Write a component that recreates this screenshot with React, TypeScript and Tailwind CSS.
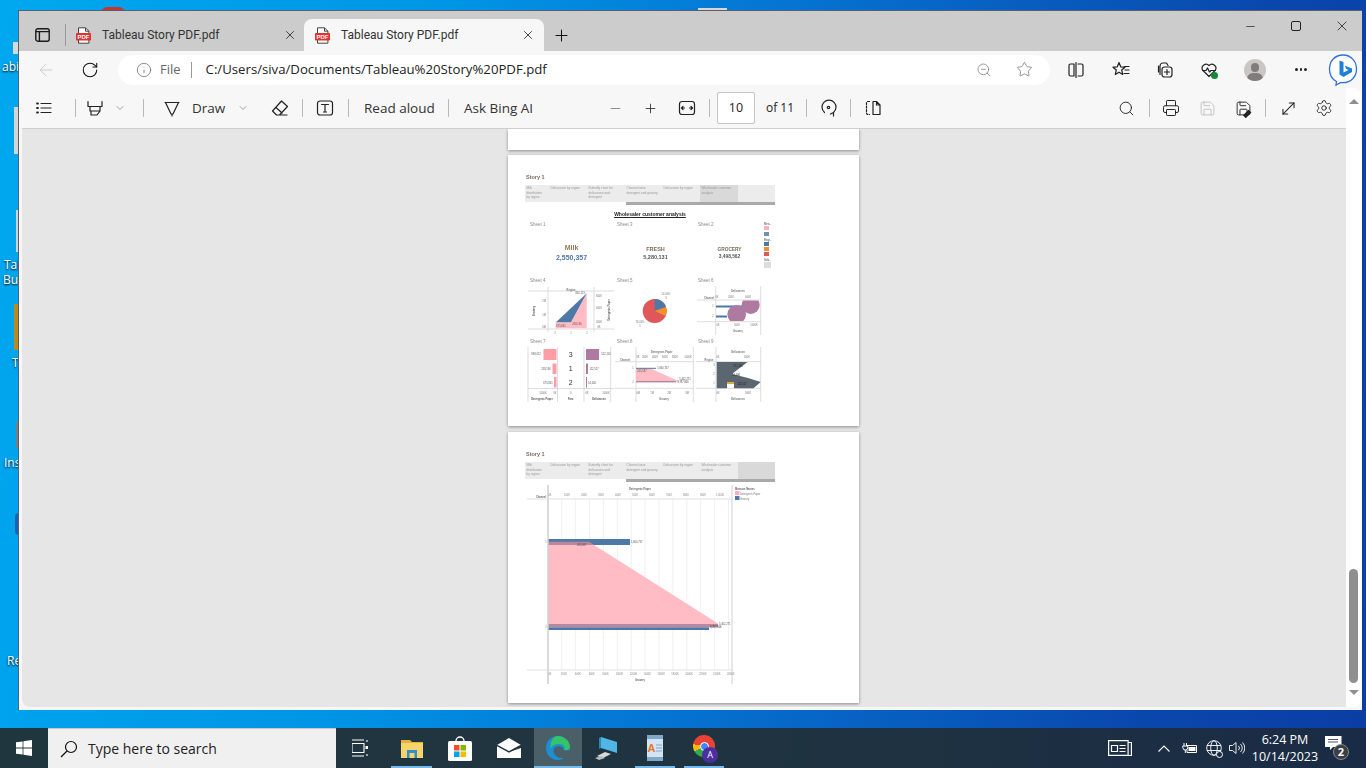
import { ChevronDown, Minus, Plus, Search, Printer, Save, Settings, X, MoveDiagonal, ArrowLeft, RotateCw, Info, ZoomOut, Star } from 'lucide-react'
import type { ReactNode } from 'react'

const BLUE = '#4e79a7'
const PINK = '#ffbcc4'
const PURPLE = '#af7aa1'
const AX = '#d4d4d4'
const LBL = '#777'

function Icon({ w = 20, h = 20, children }: { w?: number; h?: number; children: ReactNode }) {
  return (
    <svg width={w} height={h} viewBox="0 0 20 20" fill="none" stroke="currentColor" strokeWidth="1.2" strokeLinecap="round" strokeLinejoin="round" className="shrink-0">
      {children}
    </svg>
  )
}

function Sep() {
  return <div className="w-px h-[18px] bg-[#b9b9b9] shrink-0" />
}

function PdfIcon() {
  return (
    <svg width="15" height="17" viewBox="0 0 15 17" className="shrink-0">
      <path d="M2.5 .8h7l3.4 3.4v12H2.5z" fill="#fff" stroke="#444" strokeWidth="1" />
      <path d="M9.5 .8v3.4h3.4" fill="none" stroke="#444" strokeWidth="1" />
      <rect x="0" y="6" width="15" height="7.5" rx=".8" fill="#e8312f" />
      <text x="7.5" y="12" textAnchor="middle" fontSize="6" fontWeight="700" fill="#fff" fontFamily="Liberation Sans, sans-serif">PDF</text>
    </svg>
  )
}

function TabStrip() {
  return (
    <div className="h-[40px] bg-[#cccccc] flex items-end shrink-0">
      <div className="h-[32px] flex items-center ml-[13px] w-[20px] justify-center">
        <svg width="15" height="14" viewBox="0 0 15 14" fill="none" stroke="#1a1a1a" strokeWidth="1.4">
          <rect x=".8" y=".8" width="13.4" height="12.4" rx="2" />
          <path d="M.8 3.6h13.4M4.4 3.6v9.6" />
        </svg>
      </div>
      <div className="h-[32px] flex items-center ml-[13px]"><div className="w-px h-[22px] bg-[#999]" /></div>
      <div className="h-[32px] w-[227px] flex items-center ml-[10px] pr-[6px] text-[12px] text-[#333] font-['Roboto',sans-serif]">
        <PdfIcon />
        <span className="ml-[11px] whitespace-nowrap">Tableau Story PDF.pdf</span>
        <X size={14} strokeWidth={1.4} className="ml-auto text-[#222]" />
      </div>
      <div className="h-[32px] w-[240px] ml-[1px] bg-[#f7f7f7] rounded-t-[8px] flex items-center pl-[11px] pr-[9px] text-[12px] text-[#333] font-['Roboto',sans-serif]">
        <PdfIcon />
        <span className="ml-[11px] whitespace-nowrap">Tableau Story PDF.pdf</span>
        <X size={14} strokeWidth={1.4} className="ml-auto text-[#222]" />
      </div>
      <div className="h-[32px] flex items-center ml-[7px] w-[20px] justify-center">
        <Plus size={19} strokeWidth={1.3} className="text-[#111]" />
      </div>
      <div className="ml-auto flex gap-[26px] pr-[10px] h-[30px] self-start items-center text-[#222]">
        <div className="w-[20px] flex justify-center"><Minus size={13} strokeWidth={1.3} /></div>
        <div className="w-[20px] flex justify-center"><div className="w-[10px] h-[10px] border border-[#222] rounded-[2px]" /></div>
        <div className="w-[20px] flex justify-center"><X size={16} strokeWidth={1.2} /></div>
      </div>
    </div>
  )
}

function AddressRow() {
  return (
    <div className="h-[37px] flex items-center shrink-0 bg-[#f7f7f7]">
      <div className="ml-[17px] w-[20px] flex justify-center text-[#c4c4c4]"><ArrowLeft size={20} strokeWidth={1} /></div>
      <div className="ml-[24px] w-[20px] flex justify-center text-[#111]"><RotateCw size={18} strokeWidth={1.4} /></div>
      <div className="ml-[18px] w-[932px] h-[30px] bg-white rounded-full flex items-center pl-[18px] pr-[17px]">
        <Info size={16} strokeWidth={1.1} className="text-[#666]" />
        <span className="ml-[8px] text-[13px] text-[#666]">File</span>
        <div className="ml-[10px] w-px h-[16px] bg-[#999]" />
        <span className="ml-[14px] text-[13.2px] text-[#222] whitespace-nowrap">C:/Users/siva/Documents/Tableau%20Story%20PDF.pdf</span>
        <ZoomOut size={16} strokeWidth={1.1} className="ml-auto mr-[1px] text-[#777]" />
        <Star size={17} strokeWidth={1.1} className="ml-[23px] text-[#777]" />
      </div>
      <div className="ml-[16px] text-[#222]">
        <Icon><path d="M4.5 4h3.5v12H4.5a1.5 1.5 0 0 1-1.5-1.5v-9A1.5 1.5 0 0 1 4.5 4zM12 4h3.500a1.500 1.500 0 0 1 1.500 1.500v9a1.500 1.500 0 0 1-1.500 1.500H12M10 2.500v15" /></Icon>
      </div>
      <div className="ml-[25px] text-[#222]">
        <Icon><path d="M8 2.500l1.700 4.300 4.300.4-3.300 2.800 1 4.400L8 12.200l-3.700 2.200 1-4.400L2 7.200l4.300-.4zM13.500 6.500H18M14 10h4M13 13.500h5" /></Icon>
      </div>
      <div className="ml-[24px] text-[#222]">
        <Icon><path d="M5 14.500V6a3 3 0 0 1 3-3h3.500l1.500 2.500M3.500 12V6" /><rect x="7" y="7" width="10" height="10" rx="2.500" /><path d="M12 9.500v5M9.500 12h5" /></Icon>
      </div>
      <div className="ml-[24px] relative text-[#222]">
        <Icon><path d="M10 16.500L3.500 10a4 4 0 0 1 6.500-4.500A4 4 0 0 1 16.500 10L10 16.500M3.500 10.500H7l1.500-2.500 2 4 1.500-1.500h4.500" /></Icon>
        <div className="absolute right-[1px] bottom-[1px] w-[7px] h-[7px] rounded-full bg-[#14893c]" />
      </div>
      <div className="ml-[25px] w-[22px] h-[22px] rounded-full bg-[#c9c6c3] overflow-hidden relative shrink-0">
        <div className="absolute left-[7px] top-[4px] w-[8px] h-[9px] rounded-full bg-[#7f7c7a]" />
        <div className="absolute left-[3px] top-[14px] w-[16px] h-[12px] rounded-full bg-[#7f7c7a]" />
      </div>
      <div className="ml-[25px] w-[20px] flex justify-center gap-[2px]">
        <span className="w-[2.5px] h-[2.500px] rounded-full bg-[#222]" />
        <span className="w-[2.5px] h-[2.500px] rounded-full bg-[#222]" />
        <span className="w-[2.5px] h-[2.500px] rounded-full bg-[#222]" />
      </div>
      <div className="ml-[17px]">
        <svg width="30" height="34" viewBox="0 0 30 34" fill="none">
          <path d="M15 2C7 2 1.500 8 1.500 16c0 6 3 10.500 7 12.500L8 32l5-2.500c1 .2 1.500 .2 2 .2 8 0 13.500-6 13.500-13.700S23 2 15 2z" fill="#fff" stroke="#2f6fe0" strokeWidth="1.300" />
          <path d="M11.500 7.500l4 1.500v10.500l5-2.500-2.500-1.300-1-3 7 2.800v3.500l-8.500 5-4-2.500z" fill="#1f7fd6" />
        </svg>
      </div>
    </div>
  )
}

function PdfToolbar() {
  return (
    <div className="h-[41px] bg-[#f7f7f7] border-b border-[#cfcfcf] rounded-tl-[8px] flex items-center text-[#222] shrink-0 text-[13.5px]">
      <div className="w-[44px] flex justify-center">
        <Icon><path d="M7 5.500h10M7 10h10M7 14.500h10" /><path d="M3 5.500h1M3 10h1M3 14.500h1" strokeWidth="1.800" /></Icon>
      </div>
      <div className="ml-[9px]"><Sep /></div>
      <div className="ml-[9px] w-[20px]">
        <Icon><path d="M3 3.500v5h14v-5M5 8.500v4.500h10V8.500M6 13v4h6l3-4" /></Icon>
      </div>
      <ChevronDown size={12} strokeWidth={1.200} className="ml-[9px] text-[#666]" />
      <div className="ml-[17px]"><Sep /></div>
      <div className="ml-[18px]">
        <Icon><path d="M3 4.500h14M3.500 4.500l5.500 11.500h2l5.500-11.500M10 16v2" /></Icon>
      </div>
      <span className="ml-[10px] w-[32px] whitespace-nowrap text-[#333]">Draw</span>
      <ChevronDown size={12} strokeWidth={1.200} className="ml-[13px] text-[#666]" />
      <div className="ml-[21px]">
        <Icon><path d="M11.500 3l6 5.500-8 8.500H6.500L2.500 13zM6 9.500l6 5.500M6.500 17H17" /></Icon>
      </div>
      <div className="ml-[12px]"><Sep /></div>
      <div className="ml-[12px]">
        <Icon><rect x="2.500" y="3" width="15" height="14" rx="2.500" /><path d="M6.500 6.500h7M10 6.500v7.500M8.500 14h3" /></Icon>
      </div>
      <div className="ml-[13px]"><Sep /></div>
      <span className="ml-[15px] w-[70px] whitespace-nowrap text-[#333]">Read aloud</span>
      <div className="ml-[14px]"><Sep /></div>
      <span className="ml-[15px] w-[71px] whitespace-nowrap text-[#333]">Ask Bing AI</span>
      <div className="ml-[70px] w-[20px] flex justify-center text-[#777]"><Minus size={15} strokeWidth={1.300} /></div>
      <div className="ml-[15px] w-[20px] flex justify-center"><Plus size={15} strokeWidth={1.300} /></div>
      <div className="ml-[17px]">
        <Icon><rect x="2.500" y="3.500" width="15" height="13" rx="2.500" /><path d="M4.500 10h3M15.500 10h-3M6 8.500L4.500 10 6 11.500M14 8.500l1.500 1.500-1.500 1.500" /></Icon>
      </div>
      <div className="ml-[12px]"><Sep /></div>
      <div className="ml-[7px] w-[38px] h-[32px] bg-white border border-[#c4c4c4] rounded-[2px] flex items-center justify-center text-[12.5px]">10</div>
      <span className="ml-[11px] w-[27px] whitespace-nowrap text-[12px]">of 11</span>
      <div className="ml-[13px]"><Sep /></div>
      <div className="ml-[11px]">
        <Icon><path d="M6.500 14.500a7 7 0 1 1 9 0M15.500 14.500v3.500M15.500 14.500l-3 1.500" /><circle cx="10.500" cy="9.500" r="1.200" /></Icon>
      </div>
      <div className="ml-[12px]"><Sep /></div>
      <div className="ml-[12px]">
        <Icon><path d="M10 3.500h3.500l3.500 3.500v9.500h-7zM13.500 3.500V7H17" /><path d="M6.500 3.500H4.500l-1 1v11l1 1h2" strokeDasharray="2 1.500" /></Icon>
      </div>
      <div className="ml-[233px] w-[20px] flex justify-center"><Search size={17} strokeWidth={1.300} /></div>
      <div className="ml-[13px]"><Sep /></div>
      <div className="ml-[11px] w-[20px] flex justify-center"><Printer size={18} strokeWidth={1.300} /></div>
      <div className="ml-[16px] w-[20px] flex justify-center text-[#b5b5b5]"><Save size={17} strokeWidth={1.100} /></div>
      <div className="ml-[16px] relative w-[20px] flex justify-center">
        <Save size={17} strokeWidth={1.300} />
        <div className="absolute right-[2px] bottom-[1px] w-[8px] h-[3.500px] bg-[#222] -rotate-45" />
      </div>
      <div className="ml-[12px]"><Sep /></div>
      <div className="ml-[12px] w-[20px] flex justify-center"><MoveDiagonal size={19} strokeWidth={1.300} /></div>
      <div className="ml-[16px] w-[20px] flex justify-center"><Settings size={18} strokeWidth={1.200} /></div>
    </div>
  )
}

const TABS = [
  { w: 'w-[24px]', t: 'Milk\ndistribution\nby region' },
  { w: 'w-[38px]', t: 'Delicassen by region' },
  { w: 'w-[38px]', t: 'Butterfly chart for\ndelicassen and\ndetergent' },
  { w: 'w-[37px]', t: 'Channel wise\ndetergent and grocery' },
  { w: 'w-[38px]', t: 'Delicassen by region' },
  { w: 'w-[38px]', t: 'Wholesaler customer\nanalysis' },
]

function StoryHeader({ selected, lastSelected }: { selected?: number; lastSelected?: boolean }) {
  return (
    <>
      <div className="h-[6px] mt-[19px] ml-[1px] text-[5.500px] leading-[6px] font-bold text-[#7a6a58]">Story 1</div>
      <div className="mt-[5px] w-[250px] h-[17px] bg-[#ececec] flex">
        {TABS.map((tab, i) => (
          <div key={i} className={`${tab.w} h-full pt-[1px] pl-[1.500px] text-[3.200px] leading-[4.500px] text-[#999] whitespace-pre-line overflow-hidden ${i === selected ? 'bg-[#d9d9d9] text-[#666]' : ''}`}>
            {tab.t}
          </div>
        ))}
        <div className={`flex-1 ${lastSelected ? 'bg-[#d9d9d9]' : ''}`} />
      </div>
      <div className="w-[250px] h-[3px] pl-[101px]"><div className="h-full bg-[#a9a9a9]" /></div>
    </>
  )
}

function T({ x, y, s = 2.6, c = LBL, a = 'middle', b, r, children }: { x: number; y: number; s?: number; c?: string; a?: 'middle' | 'start' | 'end'; b?: boolean; r?: number; children: ReactNode }) {
  return (
    <text x={x} y={y} fontSize={s} fill={c} textAnchor={a} fontWeight={b ? 700 : 400} transform={r ? `rotate(${r} ${x} ${y})` : undefined}>
      {children}
    </text>
  )
}

function Line({ x1, y1, x2, y2, c = AX, w = 0.8 }: { x1: number; y1: number; x2: number; y2: number; c?: string; w?: number }) {
  return <line x1={x1} y1={y1} x2={x2} y2={y2} stroke={c} strokeWidth={w} />
}

function Sheet({ name, x, y, w, h, children }: { name: string; x: number; y: number; w: number; h: number; children: ReactNode }) {
  return (
    <div className="flex flex-col min-w-0">
      <div className="h-[6px] pl-[2px] text-[4.500px] leading-[6px] text-[#8a8a8a] whitespace-nowrap">{name}</div>
      <svg width={w} height={h} viewBox={`${x} ${y} ${w} ${h}`} className="block overflow-visible">{children}</svg>
    </div>
  )
}

function Kpi({ name, value, size, top, nameColor, valueColor, align }: { name: string; value: string; size: string; top: string; nameColor: string; valueColor: string; align: string }) {
  return (
    <div className="flex flex-col min-w-0">
      <div className="h-[6px] pl-[2px] text-[4.500px] leading-[6px] text-[#8a8a8a]">{align}</div>
      <div className={`flex flex-col items-center font-bold ${size} ${top}`}>
        <span className={nameColor}>{name}</span>
        <span className={valueColor}>{value}</span>
      </div>
    </div>
  )
}

function Legend() {
  return (
    <div className="pl-[1px] text-[2.800px] leading-[4px] text-[#777] flex flex-col">
      <span className="font-bold">Mea..</span>
      <div className="w-[4.500px] h-[4px] bg-[#ffb0bb]" />
      <div className="w-[4.500px] h-[4px] bg-[#6f8fb5] mt-[1.500px]" />
      <span className="font-bold mt-[2px]">Regi..</span>
      <div className="w-[4.500px] h-[4px] bg-[#4e79a7]" />
      <div className="w-[4.500px] h-[4px] bg-[#f28e2b] mt-[1px]" />
      <div className="w-[4.500px] h-[4px] bg-[#e15759] mt-[1px]" />
      <span className="font-bold mt-[2px]">Sub..</span>
      <div className="w-[7px] h-[6px] bg-[#dcdcdc]" />
    </div>
  )
}

function Chart4() {
  return (
    <Sheet name="Sheet 4" x={528} y={284} w={87} h={55}>
      <Line x1={528} y1={291} x2={614} y2={291} />
      <Line x1={528} y1={329} x2={614} y2={329} />
      <Line x1={548} y1={287} x2={548} y2={332} />
      <Line x1={594} y1={287} x2={594} y2={332} />
      <polygon points="586.700,293.300 586.700,328.300 555.700,328.300 555.700,322.300 571,322.300" fill={PINK} />
      <polygon points="556,322.300 586.700,293.300 571,322.300" fill={BLUE} />
      <T x={571} y={290.500} b>Region</T>
      <T x={580} y={294} c="#555">850,113</T>
      <T x={561} y={327} c="#555">675,841</T>
      <T x={577} y={325} c="#555">258,136</T>
      <T x={544} y={302}>2M</T>
      <T x={544} y={316}>1M</T>
      <T x={544} y={327.500}>0M</T>
      <T x={599} y={297}>600K</T>
      <T x={599} y={309}>400K</T>
      <T x={599} y={323}>200K</T>
      <T x={599} y={328}>0K</T>
      <T x={535} y={311} r={-90} b c="#555">Grocery</T>
      <T x={610} y={310} r={-90} b c="#555">Detergents Paper</T>
      <T x={555} y={334}>3</T>
      <T x={571} y={334}>1</T>
      <T x={587} y={334}>2</T>
    </Sheet>
  )
}

function Chart5() {
  return (
    <Sheet name="Sheet 5" x={615} y={284} w={81} h={55}>
      <circle cx={654.700} cy={311} r={12} fill="#e15759" />
      <path d="M654.700 311V299A12 12 0 0 1 666 307z" fill={BLUE} />
      <path d="M654.700 311L666 307A12 12 0 0 1 665.500 316z" fill="#f28e2b" />
      <T x={666} y={295}>14.00%</T>
      <T x={666} y={298.500}>3</T>
      <T x={640} y={323}>76.00%</T>
      <T x={640} y={326.500}>1</T>
    </Sheet>
  )
}

function Chart6() {
  return (
    <Sheet name="Sheet 6" x={696} y={284} w={67} h={55}>
      <defs>
        <clipPath id="sheet6"><rect x={716} y={300.500} width={44} height={20.500} /></clipPath>
      </defs>
      <Line x1={715.700} y1={286} x2={715.700} y2={335} />
      <Line x1={760.700} y1={286} x2={760.700} y2={335} />
      <Line x1={697} y1={300} x2={761} y2={300} />
      <Line x1={697} y1={321.700} x2={761} y2={321.700} />
      <T x={738} y={292} b>Delicassen</T>
      <T x={717} y={297.500}>0K</T>
      <T x={731} y={297.500}>200K</T>
      <T x={748} y={297.500}>400K</T>
      <T x={709} y={299} b>Channel</T>
      <T x={713} y={307}>1</T>
      <T x={713} y={317}>2</T>
      <rect x={716} y={305.500} width={28} height={2} fill={BLUE} />
      <rect x={716} y={315.500} width={11} height={2} fill={BLUE} />
      <g clipPath="url(#sheet6)">
        <circle cx={750.700} cy={305} r={9} fill={PURPLE} />
        <circle cx={736.700} cy={314.300} r={9.300} fill={PURPLE} />
      </g>
      <T x={718} y={325.500}>0K</T>
      <T x={737} y={325.500}>500K</T>
      <T x={754} y={325.500}>1000K</T>
      <T x={738} y={332} b>Grocery</T>
    </Sheet>
  )
}

function Chart7() {
  return (
    <Sheet name="Sheet 7" x={528} y={345} w={87} h={59}>
      <Line x1={528} y1={347} x2={528} y2={402} />
      <Line x1={557.500} y1={347} x2={557.500} y2={402} />
      <Line x1={584} y1={347} x2={584} y2={402} />
      <Line x1={610.700} y1={347} x2={610.700} y2={402} />
      <Line x1={528} y1={388.500} x2={614} y2={388.500} />
      <rect x={543.500} y={349} width={13} height={11} fill="#ff9da7" />
      <rect x={552.500} y={363.500} width={4} height={10.500} fill="#ff9da7" />
      <rect x={554} y={377} width={2.500} height={10.500} fill="#ff9da7" />
      <rect x={586} y={349} width={13} height={11} fill={PURPLE} />
      <rect x={586} y={363.500} width={2} height={10.500} fill={PURPLE} />
      <rect x={586} y={377} width={1} height={10.500} fill={PURPLE} />
      <T x={536} y={355} c="#555">998,412</T>
      <T x={546} y={369.500} c="#555">258,136</T>
      <T x={548} y={383.500} c="#555">675,841</T>
      <T x={606} y={355} c="#555">512,110</T>
      <T x={594} y={369.500} c="#555">112,527</T>
      <T x={592} y={383.500} c="#555">54,506</T>
      <T x={570.700} y={357} s={7} c="#333">3</T>
      <T x={570.700} y={371} s={7} c="#333">1</T>
      <T x={570.700} y={385} s={7} c="#333">2</T>
      <T x={543} y={394}>1000K</T>
      <T x={555} y={394}>0K</T>
      <T x={570.700} y={394}>0</T>
      <T x={587} y={394}>0K</T>
      <T x={606} y={394}>1000K</T>
      <T x={542} y={399.500} b c="#555">Detergents Paper</T>
      <T x={570.700} y={399.500} b c="#555">Fam</T>
      <T x={599} y={399.500} b c="#555">Delicassen</T>
    </Sheet>
  )
}

function Chart8() {
  return (
    <Sheet name="Sheet 8" x={615} y={345} w={81} h={59}>
      <Line x1={636} y1={347} x2={636} y2={402} />
      <Line x1={693.300} y1={347} x2={693.300} y2={402} />
      <Line x1={615} y1={361.700} x2={694} y2={361.700} />
      <Line x1={615} y1={388.300} x2={694} y2={388.300} />
      <polygon points="636,368.300 650,368.300 680,381.700 636,381.700" fill={PINK} />
      <rect x={636} y={367.800} width={20} height={1} fill={BLUE} />
      <rect x={636} y={381.300} width={40} height={1} fill="#8d6a93" />
      <T x={661.700} y={352.500} b>Detergents Paper</T>
      <T x={638} y={358}>0K</T>
      <T x={645} y={358}>200K</T>
      <T x={655} y={358}>400K</T>
      <T x={665} y={358}>600K</T>
      <T x={675} y={358}>800K</T>
      <T x={688} y={358}>1000K</T>
      <T x={625} y={360.500} b>Channel</T>
      <T x={633} y={369}>1</T>
      <T x={633} y={382.500}>2</T>
      <T x={663} y={369} c="#555">1,660,757</T>
      <T x={642} y={372} c="#555">205,587</T>
      <T x={685} y={380} c="#555">5,402,271</T>
      <T x={683} y={383} c="#555">3,787,806</T>
      <T x={638} y={393.500}>0M</T>
      <T x={652} y={393.500}>1M</T>
      <T x={669} y={393.500}>2M</T>
      <T x={687} y={393.500}>3M</T>
      <T x={664} y={400} b>Grocery</T>
    </Sheet>
  )
}

function Chart9() {
  return (
    <Sheet name="Sheet 9" x={696} y={345} w={67} h={59}>
      <Line x1={716} y1={347} x2={716} y2={402} />
      <Line x1={760.700} y1={347} x2={760.700} y2={402} />
      <Line x1={696} y1={361.700} x2={761} y2={361.700} />
      <Line x1={696} y1={388.300} x2={761} y2={388.300} />
      <polygon points="716.700,362 747.500,362 732,374 748,378 760.700,382 753.500,388.300 734,388.300 734,383 727,383 727,388.300 716.700,388.300" fill="#5c6670" />
      <rect x={727} y={382} width={7} height={2} fill="#d4b13a" />
      <T x={738} y={352.500} b>Delicassen</T>
      <T x={718} y={358}>0K</T>
      <T x={747} y={358}>500K</T>
      <T x={709} y={360.500} b>Region</T>
      <T x={714} y={366}>3</T>
      <T x={714} y={375}>2</T>
      <T x={714} y={384}>1</T>
      <T x={738} y={366.500} c="#222">512,110</T>
      <T x={736} y={375.500} c="#222">54,506</T>
      <T x={742} y={384.500} c="#222">112,527</T>
      <T x={718} y={393.500}>0K</T>
      <T x={748} y={393.500}>500K</T>
      <T x={738} y={399.500} b>Delicassen</T>
    </Sheet>
  )
}

function AnalysisPage() {
  return (
    <div className="w-[351px] h-[271px] bg-white shadow-[0_1px_3px_rgba(0,0,0,0.4)] pl-[17px] shrink-0 flex flex-col">
      <div className="flex flex-col blur-[0.4px]">
        <StoryHeader selected={5} />
        <div className="w-[250px] mt-[6px] h-[6px] text-center text-[5px] leading-[6px] font-bold underline text-[#222]">Wholesaler customer analysis</div>
        <div className="mt-[5px] pl-[3px] grid grid-cols-[87px_81px_67px_12px] grid-rows-[56px_61px_65px]">
          <Kpi align="Sheet 1" name="Milk" value="2,550,357" size="text-[7px] leading-[10px]" top="pt-[15px]" nameColor="text-[#8b7b5a]" valueColor="text-[#4e79a7]" />
          <Kpi align="Sheet 3" name="FRESH" value="5,280,131" size="text-[5.500px] leading-[8px]" top="pt-[17px]" nameColor="text-[#7a6a58]" valueColor="text-[#555]" />
          <Kpi align="Sheet 2" name="GROCERY" value="3,498,562" size="text-[4.800px] leading-[7px]" top="pt-[18px]" nameColor="text-[#7a6a58]" valueColor="text-[#555]" />
          <Legend />
          <Chart4 />
          <Chart5 />
          <Chart6 />
          <div />
          <Chart7 />
          <Chart8 />
          <Chart9 />
        </div>
      </div>
    </div>
  )
}

const GRID = Array.from({ length: 13 }, (_, i) => 561.700 + i * 13.900)
const TOP_TICKS = ['0K', '100K', '200K', '300K', '400K', '500K', '600K', '700K', '800K', '900K', '1,000K', '']
const BOT_TICKS = ['0K', '200K', '400K', '600K', '800K', '1000K', '1200K', '1400K', '1600K', '1800K', '2000K', '2200K', '2400K', '2600K']

function ButterflyPage() {
  return (
    <div className="w-[351px] h-[271px] bg-white shadow-[0_1px_3px_rgba(0,0,0,0.4)] pl-[17px] shrink-0 flex flex-col">
      <div className="flex flex-col blur-[0.4px]">
        <StoryHeader lastSelected />
        <svg width="250" height="201" viewBox="525 485 250 201" className="mt-[3px] block">
          {GRID.map(x => <Line key={x} x1={x} y1={499} x2={x} y2={670} c="#ececec" />)}
          <polygon points="548,543 589,541.700 718,623.500 718,624 548,624" fill={PINK} />
          <rect x={548} y={539} width={82} height={6} fill={BLUE} />
          <polygon points="548,541.800 589,541.800 594.300,545 548,545" fill="#b888a0" />
          <rect x={548} y={624} width={170} height={3.300} fill="#b888a0" />
          <rect x={548} y={627.300} width={161} height={2.700} fill={BLUE} />
          <Line x1={548} y1={485} x2={548} y2={684} c="#cfcfcf" w={1.500} />
          <Line x1={732} y1={485} x2={732} y2={684} c="#cfcfcf" w={1} />
          <Line x1={527} y1={499} x2={733} y2={499} c="#d8d8d8" />
          <Line x1={527} y1={670} x2={733} y2={670} c="#d8d8d8" />
          <T x={640} y={490} b c="#666">Detergents Paper</T>
          <T x={541} y={498} b c="#666">Channel</T>
          {TOP_TICKS.map((t, i) => <T key={i} x={550 + i * 17} y={495.500} c="#888">{t}</T>)}
          {BOT_TICKS.map((t, i) => <T key={i} x={550 + i * 13.900} y={675} c="#888">{t}</T>)}
          <T x={640} y={681} b c="#666">Grocery</T>
          <T x={546} y={542.500}>1</T>
          <T x={546} y={628}>2</T>
          <T x={631} y={542.500} a="start" c="#555">1,660,757</T>
          <T x={581.700} y={545.700} c="#444">205,587</T>
          <T x={719} y={624.500} a="start" c="#555">5,402,271</T>
          <T x={710} y={627.700} a="start" c="#444">3,787,806</T>
          <T x={735} y={490} a="start" b c="#666">Measure Names</T>
          <rect x={735} y={491} width={4.500} height={4} fill="#ffb0bb" />
          <rect x={735} y={496} width={4.500} height={4} fill={BLUE} />
          <T x={740} y={494.500} a="start">Detergents Paper</T>
          <T x={740} y={499.500} a="start">Grocery</T>
        </svg>
      </div>
    </div>
  )
}

function PdfView() {
  return (
    <div className="flex-1 bg-[#e6e6e6] overflow-hidden rounded-bl-[8px] flex flex-col pl-[486px] font-['Liberation_Sans',sans-serif]">
      <div className="w-[351px] h-[21px] bg-white shadow-[0_1px_3px_rgba(0,0,0,0.4)] shrink-0" />
      <div className="mt-[5px]"><AnalysisPage /></div>
      <div className="mt-[6px]"><ButterflyPage /></div>
    </div>
  )
}

function Scrollbar() {
  return (
    <div className="w-[15px] bg-white rounded-r-[8px] flex flex-col items-center pb-[12px] pt-[11px]">
      <div className="w-0 h-0 border-x-[5px] border-x-transparent border-b-[5px] border-b-[#8f8f8f]" />
      <div className="mt-auto w-[9px] h-[114px] rounded-full bg-[#8f8f8f] mr-[1px]" />
      <div className="mt-[7px] w-0 h-0 border-x-[5px] border-x-transparent border-t-[5px] border-t-[#8f8f8f]" />
    </div>
  )
}

function BrowserWindow() {
  return (
    <div className="absolute left-[18px] top-[10px] w-[1344px] h-[700px] bg-[#f7f7f7] border-l border-t border-[#55626d] flex flex-col font-['Open_Sans',sans-serif]">
      <TabStrip />
      <AddressRow />
      <div className="flex-1 min-h-0 ml-[3px] mb-[3px] flex rounded-[8px]">
        <div className="w-[1324px] flex flex-col min-h-0">
          <PdfToolbar />
          <PdfView />
        </div>
        <Scrollbar />
      </div>
    </div>
  )
}

function DesktopBits() {
  const label = "absolute text-[12px] leading-[15px] text-white font-['Open_Sans',sans-serif] [text-shadow:0_1px_2px_#000]"
  return (
    <>
      <div className="absolute left-[100px] top-[7px] w-[26px] h-[8px] rounded-t-full bg-[#c8352c]" />
      <div className="absolute left-[698px] top-[8px] w-[29px] h-[4px] bg-[#d8d8d8]" />
      <div className="absolute left-[13px] top-[42px] w-[6px] h-[12px] bg-[#d5d9de]" />
      <span className={`${label} left-[2px] top-[59px]`}>abi</span>
      <div className="absolute left-[14px] top-[107px] w-[5px] h-[47px] bg-[#d5d5d5]" />
      <div className="absolute left-[16px] top-[210px] w-[3px] h-[42px] bg-[#cfd3d8]" />
      <span className={`${label} left-[4px] top-[257px]`}>Tab</span>
      <span className={`${label} left-[3px] top-[272px]`}>Bu</span>
      <div className="absolute left-[14px] top-[304px] w-[5px] h-[46px] bg-[#b98a1c]" />
      <span className={`${label} left-[12px] top-[355px]`}>T</span>
      <div className="absolute left-[16px] top-[422px] w-[3px] h-[26px] bg-[#7d7d7d]" />
      <span className={`${label} left-[4px] top-[455px]`}>Ins</span>
      <div className="absolute left-[15px] top-[513px] w-[8px] h-[22px] rounded-full bg-[#1d5fb0]" />
      <span className={`${label} left-[7px] top-[653px]`}>Re</span>
    </>
  )
}

function Underline() {
  return <div className="absolute bottom-0 left-0 right-0 h-[2px] bg-[#76b9ed]" />
}

function Taskbar() {
  return (
    <div className="h-[40px] shrink-0 bg-[linear-gradient(90deg,#20363f,#1f3440_55%,#1a2b45)] flex items-center text-white font-['Open_Sans',sans-serif]">
      <div className="w-[48px] flex justify-center">
        <svg width="16" height="16" viewBox="0 0 16 16" fill="#fff"><path d="M0 2.300l6.600-.9v6.200H0zM7.400 1.300L16 0v7.600H7.400zM0 8.400h6.600v6.200L0 13.700zM7.400 8.400H16V16l-8.600-1.200z" /></svg>
      </div>
      <div className="w-[288px] h-full bg-[#f0f0f0] border-t border-[#c9c9c9] flex items-center pl-[12px] text-[#222]">
        <svg width="18" height="18" viewBox="0 0 18 18" fill="none" stroke="#111" strokeWidth="1.200"><circle cx="11" cy="7" r="5.500" /><path d="M7 11l-6 6" /></svg>
        <span className="ml-[10px] text-[14px] whitespace-nowrap">Type here to search</span>
      </div>
      <div className="ml-[16px] w-[16px]">
        <svg width="16" height="20" viewBox="0 0 16 20" fill="none" stroke="#fff" strokeWidth="1.100"><path d="M0 2h12M0 18h12M0 5.500h12v9H0zM15 2v2M15 16v2" /><rect x="13.500" y="8" width="2.500" height="3" fill="#fff" stroke="none" /></svg>
      </div>
      <div className="ml-[23px] w-[41px] h-full relative flex items-center justify-center">
        <svg width="24" height="24" viewBox="0 0 24 24"><path d="M1 4h9l2 2h11v3H1z" fill="#e5b13b" /><path d="M1 7h22v15H1z" fill="#f6d36b" /><rect x="7" y="14" width="10" height="8" fill="#2f8fd0" /><rect x="9.500" y="17" width="5" height="5" fill="#f6d36b" /></svg>
        <Underline />
      </div>
      <div className="ml-[16px] w-[24px] flex justify-center">
        <svg width="24" height="26" viewBox="0 0 24 26"><path d="M8 6a4 4 0 0 1 8 0" fill="none" stroke="#fff" strokeWidth="1.300" /><rect x="0" y="6" width="24" height="20" rx="1.500" fill="#fff" /><rect x="6" y="10" width="5.500" height="5.500" fill="#f25022" /><rect x="12.500" y="10" width="5.500" height="5.500" fill="#7fba00" /><rect x="6" y="16.500" width="5.500" height="5.500" fill="#00a4ef" /><rect x="12.500" y="16.500" width="5.500" height="5.500" fill="#ffb900" /></svg>
      </div>
      <div className="ml-[25px] w-[24px] flex justify-center">
        <svg width="24" height="20" viewBox="0 0 24 20"><path d="M0 7L12 0l12 7v13H0z" fill="#fff" /><path d="M0 7.500L12 14l12-6.500" fill="none" stroke="#20363f" strokeWidth="1.500" /><path d="M12 14l12-6.500v2.500z" fill="#20363f" /></svg>
      </div>
      <div className="ml-[13px] w-[48px] h-full bg-[#4a5f68] relative flex items-center justify-center">
        <svg width="26" height="26" viewBox="0 0 26 26">
          <path d="M13 1C6 1 1 6.500 1 13c0 7 5.500 12 11 12 3 0 5.500-.8 7.500-2.300-6 1.500-11-2.500-11-7 0-2.500 2-4.500 5-4.500 3.500 0 5 2 5 4h6.500C25 7 20 1 13 1z" fill="#1b8fd4" />
          <path d="M13 1c6 0 12 5 12 10.800 0 2.500-3 3.800-5.500 3.300 1-2.500-.5-6-6-6-4 0-7 2.500-8 5C5 6.500 8 1 13 1z" fill="#35c36a" />
        </svg>
        <Underline />
      </div>
      <div className="ml-[13px] w-[24px] flex justify-center">
        <svg width="24" height="26" viewBox="0 0 24 26"><path d="M6 2l16 5v11L6 13z" fill="#4fb6e6" /><path d="M6 2v11l-2 1V3z" fill="#2d86b8" /><path d="M2 21l8-4 6 2-8 4z" fill="#d9d9d9" /><path d="M0 23l6-2 4 2-6 2z" fill="#bcbcbc" /></svg>
      </div>
      <div className="ml-[16px] w-[40px] h-full relative flex items-center justify-center">
        <svg width="18" height="28" viewBox="0 0 18 28"><path d="M1 1h16v26H1z" fill="#d5e4f2" /><path d="M1 1h16v4H1zM1 23h16v4H1z" fill="#7fa7cc" /><text x="5.500" y="18" fontSize="11" fontWeight="700" fill="#e87722" textAnchor="middle" fontFamily="Liberation Sans, sans-serif">A</text><path d="M10 11h6M10 14h6M10 17h6" stroke="#7fa7cc" /></svg>
        <Underline />
      </div>
      <div className="ml-[9px] w-[40px] h-full relative flex items-center justify-center">
        <div className="relative w-[24px] h-[26px] translate-x-[1px]">
          <div className="absolute left-0 top-0 w-[22px] h-[22px] rounded-full bg-[conic-gradient(#ea4335_0_120deg,#34a853_120deg_240deg,#fbbc05_240deg_280deg,#ea4335_280deg)] flex items-center justify-center">
            <div className="w-[9px] h-[9px] rounded-full bg-[#4285f4] border border-white" />
          </div>
          <div className="absolute left-[9px] top-[12px] w-[16px] h-[16px] rounded-full bg-[#4c2f9f] text-[9px] leading-[16px] text-center">A</div>
        </div>
        <Underline />
      </div>
      <div className="ml-[384px] w-[24px] flex justify-center">
        <svg width="24" height="16" viewBox="0 0 24 16" fill="none" stroke="#fff" strokeWidth="1.200"><path d="M.6 .6h19.500v14.800H.6zM20 2.500h3.400v13H20" /><path d="M3.500 5.500h6v6h-6zM11.500 5.500h6M11.500 8.500h6M11.500 11.500h6" /></svg>
      </div>
      <div className="ml-[26px] w-[12px] flex justify-center">
        <svg width="12" height="7" viewBox="0 0 12 7" fill="none" stroke="#fff" strokeWidth="1.100"><path d="M.5 6.500L6 1l5.500 5.500" /></svg>
      </div>
      <div className="ml-[12px] w-[16px] flex justify-center">
        <svg width="16" height="12" viewBox="0 0 16 12" fill="none" stroke="#fff" strokeWidth="1"><path d="M5 3.500h9.500v7H5V8" /><rect x="6.500" y="5" width="7" height="4" fill="#fff" stroke="none" /><path d="M2 1v3M4.500 1v3M.8 4h5v1.500a2.500 2.500 0 0 1-5 0zM3.300 8v3" /></svg>
      </div>
      <div className="ml-[8px] relative w-[16px] flex justify-center">
        <svg width="16" height="16" viewBox="0 0 16 16" fill="none" stroke="#fff" strokeWidth=".9"><circle cx="8" cy="8" r="7.300" /><ellipse cx="8" cy="8" rx="3.300" ry="7.300" /><path d="M1 5.500h14M1 10.500h14" /></svg>
        <div className="absolute -right-[1px] -bottom-[2px] w-[7px] h-[7px] rounded-full bg-[#1b2a44] border border-white" />
      </div>
      <div className="ml-[7px] w-[16px] flex justify-center">
        <svg width="16" height="14" viewBox="0 0 16 14" fill="none" stroke="#fff" strokeWidth=".9"><path d="M.5 4.500h3L7 1.500v11L3.500 9.500h-3zM9.500 4.800a3.200 3.200 0 0 1 0 4.400M11.500 3a5.500 5.500 0 0 1 0 8M13.500 1.500a7.800 7.800 0 0 1 0 11" /></svg>
      </div>
      <div className="ml-[4px] w-[72px] flex flex-col items-center text-[12.500px] leading-[17px] whitespace-nowrap">
        <span>6:24 PM</span>
        <span>10/14/2023</span>
      </div>
      <div className="ml-[4px] relative w-[24px] h-[24px]">
        <svg width="17" height="15" viewBox="0 0 17 15" className="absolute left-0 top-0"><path d="M0 0h16.500v11H8l-3 3v-3H0z" fill="#fff" /><path d="M3 3.500h10M3 6h10" stroke="#1b2a44" strokeWidth=".8" /></svg>
        <div className="absolute left-[8px] top-[8px] w-[16px] h-[16px] rounded-full bg-[#3a3f46] border border-[#888] text-[11px] leading-[14px] font-bold text-center">2</div>
      </div>
    </div>
  )
}

export default function App() {
  return (
    <div className="w-[1366px] h-[768px] overflow-hidden flex flex-col">
      <div className="relative flex-1 bg-[linear-gradient(100deg,#00a8ef_0%,#0095e6_30%,#0571d0_55%,#0a47ad_85%,#0a3ea5_100%)]">
        <DesktopBits />
        <BrowserWindow />
      </div>
      <Taskbar />
    </div>
  )
}
